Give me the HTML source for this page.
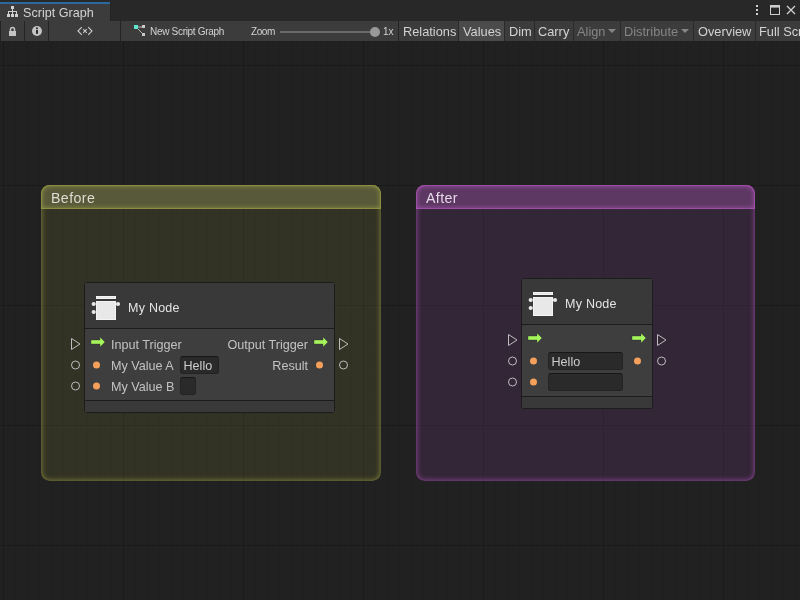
<!DOCTYPE html>
<html><head><meta charset="utf-8">
<style>
*{box-sizing:border-box;margin:0;padding:0}
html,body{width:800px;height:600px;overflow:hidden;background:#212121;font-family:"Liberation Sans",sans-serif;}
.abs{position:absolute}
#tabstrip{left:0;top:0;width:800px;height:21px;background:#282828}
#tab{left:0;top:2px;width:110px;height:19px;background:#3c3c3c;border-top:2px solid #2c69a1}
#tabtitle{left:23px;top:6px;font-size:12.6px;will-change:transform;color:#d2d2d2;white-space:nowrap}
#toolbar{left:0;top:21px;width:800px;height:20px;background:#3c3c3c;border-left:1px solid #232323}
.sep{position:absolute;top:21px;width:1px;height:20px;background:#242424}
.btn{position:absolute;will-change:transform;top:21px;height:20px;font-size:12.8px;color:#d2d2d2;white-space:nowrap;line-height:22px}
.dim{color:#858585}
.sm{font-size:10px;line-height:21px}
#graph{left:0;top:41px;width:800px;height:559px;
 background-color:#212121;
 background-image:
  linear-gradient(to right,#1a1a1a 0,#1a1a1a 1px,transparent 1px),
  linear-gradient(to bottom,#1a1a1a 0,#1a1a1a 1px,transparent 1px),
  linear-gradient(to right,#1f1f1f 0,#1f1f1f 1px,transparent 1px),
  linear-gradient(to bottom,#202020 0,#202020 1px,transparent 1px);
 background-size:120px 120px,120px 120px,12px 12px,12px 12px;
 background-position:3px 24px,3px 24px,3px 0px,3px 0px;
}
.group{position:absolute}
.ghead{position:absolute;left:0;top:0;right:0;height:24px;border-radius:8.5px 8.5px 0 0}
.gbody{position:absolute;left:0;top:24px;right:0;bottom:0;overflow:hidden;border-radius:0 0 8.5px 8.5px}
.gglow{position:absolute;left:0;top:-12px;right:0;bottom:0;border-radius:8.5px}
.gtitle{position:absolute;left:10px;top:5px;font-size:14.2px;letter-spacing:0.4px;line-height:16px;white-space:nowrap;will-change:transform}
.node{position:absolute;background:#3e3e3e;border:1px solid #1c1c1c;border-radius:3px}
.nhead{position:absolute;left:0;top:0;right:0;height:46px;background:#393939;border-bottom:1px solid #1c1c1c}
.nfoot{position:absolute;left:0;bottom:0;right:0;height:12px;background:#393939;border-top:1px solid #1c1c1c}
.ntitle{position:absolute;will-change:transform;left:43px;top:14px;font-size:12.5px;letter-spacing:0.25px;color:#e4e4e4;white-space:nowrap}
.lbl{position:absolute;will-change:transform;font-size:12.6px;color:#c2c2c2;white-space:nowrap;line-height:15px}
.field{position:absolute;will-change:transform;height:18px;background:#2a2a2a;border:1px solid #232323;border-top-color:#171717;border-radius:3px;font-size:12.6px;color:#cccccc;line-height:18px;padding-left:2.5px}
svg{position:absolute;overflow:visible}
</style></head><body>
<div id="tabstrip" class="abs"></div>
<div id="tab" class="abs"></div>
<div class="abs" style="left:110px;top:2px;width:1px;height:19px;background:#232323"></div>
<svg class="abs" style="left:0;top:0" width="20" height="20">
 <g fill="#d0d0d0">
  <rect x="11" y="6" width="3" height="3"/>
  <rect x="12" y="9" width="1" height="2"/>
  <rect x="8" y="11" width="9" height="1"/>
  <rect x="8" y="11" width="1" height="3"/><rect x="12" y="11" width="1" height="3"/><rect x="16" y="11" width="1" height="3"/>
  <rect x="7" y="14" width="3" height="3"/><rect x="11" y="14" width="3" height="3"/><rect x="15" y="14" width="3" height="3"/>
 </g>
</svg>
<div id="tabtitle" class="abs">Script Graph</div>
<!-- window controls -->
<svg class="abs" style="left:740px;top:0" width="60" height="21">
 <g fill="#d0d0d0">
  <rect x="16" y="5" width="2" height="2"/><rect x="16" y="9" width="2" height="2"/><rect x="16" y="13" width="2" height="2"/>
 </g>
 <rect x="30.5" y="5.5" width="9" height="9" fill="none" stroke="#d0d0d0" stroke-width="1"/>
 <rect x="30" y="5" width="10" height="2.6" fill="#cdcdcd"/>
 <path d="M47 6 L55 14 M55 6 L47 14" stroke="#d0d0d0" stroke-width="1.3"/>
</svg>

<div id="toolbar" class="abs"></div>
<div class="sep" style="left:24px"></div>
<div class="sep" style="left:48px"></div>
<div class="sep" style="left:120px"></div>
<div class="sep" style="left:398px"></div>
<!-- lock -->
<svg class="abs" style="left:0;top:21px" width="24" height="20">
 <path d="M10.5 10 V8.5 A2 2 0 0 1 14.5 8.5 V10" fill="none" stroke="#c4c4c4" stroke-width="1.5"/>
 <rect x="9" y="10" width="7" height="5" fill="#c4c4c4"/>
</svg>
<!-- info -->
<svg class="abs" style="left:24px;top:21px" width="24" height="20">
 <circle cx="13" cy="10" r="5" fill="#c4c4c4"/>
 <rect x="12" y="6.5" width="2" height="1.6" fill="#2a2a2a"/>
 <rect x="12" y="9" width="2" height="3.8" fill="#2a2a2a"/>
</svg>
<!-- <x> -->
<svg class="abs" style="left:48px;top:21px" width="72" height="20">
 <path d="M33.8 6.2 L30 10 L33.8 13.8 M40.2 6.2 L44 10 L40.2 13.8 M35.2 8.2 L38.8 11.8 M38.8 8.2 L35.2 11.8" fill="none" stroke="#cacaca" stroke-width="1.1"/>
</svg>
<!-- new script graph icon -->
<svg class="abs" style="left:121px;top:21px" width="30" height="20">
 <path d="M15 6 L22.5 6 M15 6 L22.5 13.5" stroke="#b8b8b8" stroke-width="1"/>
 <rect x="13" y="4" width="4" height="4" fill="#5ee6cc"/>
 <rect x="21" y="4" width="3" height="3" fill="#c8c8c8"/>
 <rect x="21" y="12" width="3" height="3" fill="#c8c8c8"/>
</svg>
<div class="btn sm" style="left:150px;letter-spacing:-0.3px">New Script Graph</div>
<div class="btn sm" style="left:251px;letter-spacing:-0.4px">Zoom</div>
<div class="abs" style="left:280px;top:31px;width:95px;height:2px;background:#6a6a6a"></div>
<div class="abs" style="left:370px;top:27px;width:10px;height:10px;border-radius:50%;background:#999"></div>
<div class="btn sm" style="left:383px">1x</div>

<div class="btn" style="left:399px;width:59px;padding-left:4px">Relations</div>
<div class="sep" style="left:458px;background:#2a2a2a"></div>
<div class="btn" style="left:459px;width:45px;background:#4b4b4b;padding-left:4px">Values</div>
<div class="sep" style="left:504px;background:#2a2a2a"></div>
<div class="btn" style="left:505px;width:29px;padding-left:4px">Dim</div>
<div class="sep" style="left:534px;background:#2a2a2a"></div>
<div class="btn" style="left:535px;width:38px;padding-left:3px">Carry</div>
<div class="sep" style="left:573px;background:#2a2a2a"></div>
<div class="btn dim" style="left:574px;width:47px;padding-left:3px">Align</div>
<svg class="abs" style="left:608px;top:29px" width="8" height="5"><path d="M0 0 H8 L4 4 Z" fill="#858585"/></svg>
<div class="sep" style="left:620px;background:#2a2a2a"></div>
<div class="btn dim" style="left:621px;width:72px;padding-left:3px">Distribute</div>
<svg class="abs" style="left:681px;top:29px" width="8" height="5"><path d="M0 0 H8 L4 4 Z" fill="#858585"/></svg>
<div class="sep" style="left:693px;background:#2a2a2a"></div>
<div class="btn" style="left:694px;width:61px;padding-left:4px">Overview</div>
<div class="sep" style="left:755px;background:#2a2a2a"></div>
<div class="btn" style="left:756px;width:44px;padding-left:3px">Full Screen</div>

<div id="graph" class="abs"></div>

<!-- Before group -->
<div class="group" style="left:41px;top:185px;width:340px;height:296px">
 <div class="gbody" style="background:rgba(98,100,48,0.27)"><div class="gglow" style="box-shadow:inset 0 0 5px 1px rgba(140,142,60,0.75)"></div></div>
 <div class="ghead" style="background:#57593a;box-shadow:inset 0 0 0 1px rgba(155,158,72,0.55),inset 0 0 5px 1px rgba(145,148,62,0.95)"></div>
 <div class="gtitle" style="color:#dcdcd0">Before</div>
</div>
<!-- After group -->
<div class="group" style="left:416px;top:185px;width:339px;height:296px">
 <div class="gbody" style="background:rgba(120,60,135,0.22)"><div class="gglow" style="box-shadow:inset 0 0 5px 1px rgba(166,79,176,0.7)"></div></div>
 <div class="ghead" style="background:#5c3862;box-shadow:inset 0 0 0 1px rgba(175,88,185,0.55),inset 0 0 5px 1px rgba(166,79,176,0.95)"></div>
 <div class="gtitle" style="color:#e6d8e8">After</div>
</div>

<!-- Before node -->
<div class="node" style="left:84px;top:282px;width:251px;height:131px">
 <div class="nhead"></div>
 <div class="nfoot"></div>
</div>
<div class="ntitle" style="left:128px;top:301px">My Node</div>
<!-- After node -->
<div class="node" style="left:521px;top:278px;width:132px;height:131px">
 <div class="nhead"></div>
 <div class="nfoot"></div>
</div>
<div class="ntitle" style="left:565px;top:297px">My Node</div>

<svg class="abs" style="left:0;top:0" width="800" height="600">
 <defs>
  <g id="nicon">
   <rect x="0.5" y="0.5" width="19" height="2" fill="#e6e6e6" stroke="#f4f4f4" stroke-width="1"/>
   <rect x="0.5" y="5.5" width="19" height="18" fill="#e8e8e8" stroke="#f4f4f4" stroke-width="1"/>
   <circle cx="-2.3" cy="8" r="2.1" fill="#e8e8e8"/>
   <circle cx="-2.3" cy="16" r="2.1" fill="#e8e8e8"/>
   <circle cx="22" cy="8" r="2.1" fill="#e8e8e8"/>
  </g>
  <g id="arrow">
   <path d="M0 3 H9 V0 L14 5 L9 10 V7 H0 Z" fill="#a6f45c" stroke="#2a2a2a" stroke-width="0.6" stroke-opacity="0.6"/>
  </g>
  <g id="tri">
   <path d="M0.5 0.5 L9 6 L0.5 11.5 Z" fill="none" stroke="#bdbdbd" stroke-width="1"/>
  </g>
  <g id="circ">
   <circle cx="0" cy="0" r="4" fill="none" stroke="#bdbdbd" stroke-width="1"/>
  </g>
  <g id="dot">
   <circle cx="0" cy="0" r="3.5" fill="#f5a05a"/>
  </g>
 </defs>
 <!-- Before node contents -->
 <use href="#nicon" x="96" y="296"/>
 <use href="#tri" x="71" y="338"/>
 <use href="#circ" x="75.5" y="365"/>
 <use href="#circ" x="75.5" y="386"/>
 <use href="#arrow" x="91" y="337"/>
 <use href="#dot" x="96.5" y="365"/>
 <use href="#dot" x="96.5" y="386"/>
 <use href="#arrow" x="314" y="337"/>
 <use href="#dot" x="319.5" y="365"/>
 <use href="#tri" x="339" y="338"/>
 <use href="#circ" x="343.5" y="365"/>
 <!-- After node contents -->
 <use href="#nicon" x="533" y="292"/>
 <use href="#tri" x="508" y="334"/>
 <use href="#circ" x="512.5" y="361"/>
 <use href="#circ" x="512.5" y="382"/>
 <use href="#arrow" x="528" y="333"/>
 <use href="#dot" x="533.5" y="361"/>
 <use href="#dot" x="533.5" y="382"/>
 <use href="#arrow" x="632" y="333"/>
 <use href="#dot" x="637.5" y="361"/>
 <use href="#tri" x="657" y="334"/>
 <use href="#circ" x="661.5" y="361"/>
</svg>

<div class="lbl" style="left:111px;top:338px">Input Trigger</div>
<div class="lbl" style="left:111px;top:359px">My Value A</div>
<div class="lbl" style="left:111px;top:380px">My Value B</div>
<div class="lbl" style="left:227px;top:338px;width:81px;text-align:right">Output Trigger</div>
<div class="lbl" style="left:227px;top:359px;width:81px;text-align:right">Result</div>
<div class="field" style="left:180px;top:356px;width:39px">Hello</div>
<div class="field" style="left:180px;top:377px;width:16px"></div>

<div class="field" style="left:548px;top:352px;width:75px">Hello</div>
<div class="field" style="left:548px;top:373px;width:75px"></div>
</body></html>
